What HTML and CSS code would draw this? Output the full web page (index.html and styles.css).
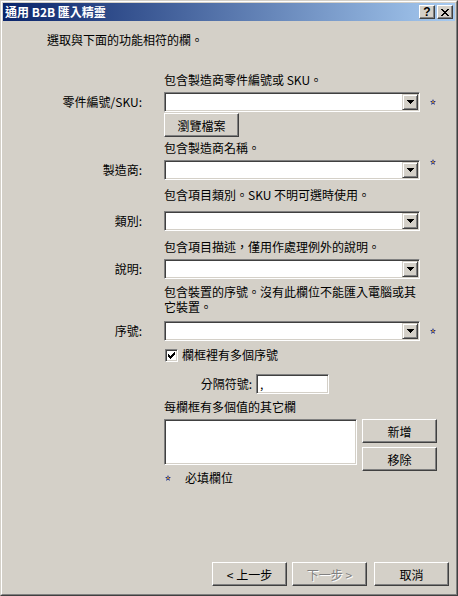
FILE: index.html
```html
<!DOCTYPE html>
<html lang="zh-Hant">
<head>
    <meta charset="UTF-8">
    <title>通用 B2B 匯入精靈</title>
    <link rel="stylesheet" href="styles.css">
</head>
<body>
    <div class="window">
        <div class="frame">
            <div class="titlebar">
                <span class="title">通用 B2B 匯入精靈</span>
                <div class="caption-btns">
                    <span class="cap-btn">?</span>
                    <span class="cap-btn">
                        <svg width="8" height="7" viewBox="0 0 8 7">
                            <path d="M0 0h2v1h-2zM6 0h2v1h-2zM1 1h2v1h-2zM5 1h2v1h-2zM2 2h4v1h-4zM3 3h2v1h-2zM2 4h4v1h-4zM1 5h2v1h-2zM5 5h2v1h-2zM0 6h2v1h-2zM6 6h2v1h-2z" fill="#000"/>
                        </svg>
                    </span>
                </div>
            </div>

            <div class="content">
                <p class="intro">選取與下面的功能相符的欄。</p>

                <p class="hint hint-part">包含製造商零件編號或 SKU。</p>
                <div class="row row-part">
                    <span class="lbl">零件編號/SKU:</span>
                    <div class="combo"><span class="dd"><svg width="7" height="4" viewBox="0 0 7 4"><path d="M0 0h7v1h-1v1h-1v1h-1v1h-1v-1h-1v-1h-1v-1h-1z"/></svg></span></div>
                    <svg class="req" width="6" height="6" viewBox="0 0 6 6"><path d="M3 0L3.8 2.1H6L4.2 3.4L4.9 6L3 4.4L1.1 6L1.8 3.4L0 2.1H2.2Z" fill="#1c2f8a"/><circle cx="3" cy="3" r="1" fill="#e8a020"/></svg>
                </div>
                <div class="row row-browse">
                    <span class="btn">瀏覽檔案</span>
                </div>

                <p class="hint hint-maker">包含製造商名稱。</p>
                <div class="row row-maker">
                    <span class="lbl">製造商:</span>
                    <div class="combo"><span class="dd"><svg width="7" height="4" viewBox="0 0 7 4"><path d="M0 0h7v1h-1v1h-1v1h-1v1h-1v-1h-1v-1h-1v-1h-1z"/></svg></span></div>
                    <svg class="req req-top" width="6" height="6" viewBox="0 0 6 6"><path d="M3 0L3.8 2.1H6L4.2 3.4L4.9 6L3 4.4L1.1 6L1.8 3.4L0 2.1H2.2Z" fill="#1c2f8a"/><circle cx="3" cy="3" r="1" fill="#e8a020"/></svg>
                </div>

                <p class="hint hint-cat">包含項目類別。SKU 不明可選時使用。</p>
                <div class="row row-cat">
                    <span class="lbl">類別:</span>
                    <div class="combo"><span class="dd"><svg width="7" height="4" viewBox="0 0 7 4"><path d="M0 0h7v1h-1v1h-1v1h-1v1h-1v-1h-1v-1h-1v-1h-1z"/></svg></span></div>
                </div>

                <p class="hint hint-desc">包含項目描述，僅用作處理例外的說明。</p>
                <div class="row row-desc">
                    <span class="lbl">說明:</span>
                    <div class="combo"><span class="dd"><svg width="7" height="4" viewBox="0 0 7 4"><path d="M0 0h7v1h-1v1h-1v1h-1v1h-1v-1h-1v-1h-1v-1h-1z"/></svg></span></div>
                </div>

                <p class="hint hint-serial">包含裝置的序號。沒有此欄位不能匯入電腦或其它裝置。</p>
                <div class="row row-serial">
                    <span class="lbl">序號:</span>
                    <div class="combo"><span class="dd"><svg width="7" height="4" viewBox="0 0 7 4"><path d="M0 0h7v1h-1v1h-1v1h-1v1h-1v-1h-1v-1h-1v-1h-1z"/></svg></span></div>
                    <svg class="req" width="6" height="6" viewBox="0 0 6 6"><path d="M3 0L3.8 2.1H6L4.2 3.4L4.9 6L3 4.4L1.1 6L1.8 3.4L0 2.1H2.2Z" fill="#1c2f8a"/><circle cx="3" cy="3" r="1" fill="#e8a020"/></svg>
                </div>

                <div class="row row-check">
                    <span class="checkbox">
                        <svg width="7" height="7" viewBox="0 0 7 7"><path d="M0 2h1v3h-1zM1 3h1v3h-1zM2 4h1v3h-1zM3 3h1v3h-1zM4 2h1v3h-1zM5 1h1v3h-1zM6 0h1v3h-1z"/></svg>
                    </span>
                    <span class="check-text">欄框裡有多個序號</span>
                </div>

                <div class="row row-sep">
                    <span class="sep-lbl">分隔符號:</span>
                    <span class="textbox">,</span>
                </div>

                <p class="multi">每欄框有多個值的其它欄</p>
                <div class="row row-list">
                    <div class="listbox"></div>
                    <div class="list-btns">
                        <span class="btn">新增</span>
                        <span class="btn">移除</span>
                    </div>
                </div>

                <div class="row row-note">
                    <svg width="6" height="6" viewBox="0 0 6 6"><path d="M3 0L3.8 2.1H6L4.2 3.4L4.9 6L3 4.4L1.1 6L1.8 3.4L0 2.1H2.2Z" fill="#1c2f8a"/><circle cx="3" cy="3" r="1" fill="#e8a020"/></svg>
                    <span>必填欄位</span>
                </div>

                <div class="footer">
                    <span class="btn">&lt; 上一步</span>
                    <span class="btn disabled">下一步 &gt;</span>
                    <span class="btn btn-cancel">取消</span>
                </div>
            </div>
        </div>
    </div>
</body>
</html>
```

FILE: styles.css
```css
:root {
    --face: #d4d0c8;
    --shadow: #808080;
    --dark: #404040;
    --light: #ffffff;
}

* {
    margin: 0;
    padding: 0;
    box-sizing: border-box;
}

body {
    width: 458px;
    height: 596px;
    font-family: "Noto Sans CJK TC", "Noto Sans", sans-serif;
    font-size: 12px;
    color: #000;
    background: var(--face);
    overflow: hidden;
}

/* Window frame */
.window {
    height: 596px;
    border: 1px solid;
    border-color: var(--face) var(--dark) var(--dark) var(--face);
}

.frame {
    height: 100%;
    border: 1px solid;
    border-color: var(--light) var(--shadow) var(--shadow) var(--light);
    padding: 1px;
    background: var(--face);
    display: flex;
    flex-direction: column;
}

.titlebar {
    height: 18px;
    flex-shrink: 0;
    display: flex;
    align-items: center;
    justify-content: space-between;
    padding: 0 2px;
    background: linear-gradient(to right, #0a246a, #a6caf0);
}

.title {
    color: #fff;
    font-weight: bold;
    line-height: 18px;
}

.caption-btns {
    display: flex;
    gap: 2px;
}

.cap-btn {
    width: 16px;
    height: 14px;
    display: flex;
    justify-content: center;
    align-items: center;
    font-family: "Liberation Sans", sans-serif;
    font-weight: bold;
    font-size: 12px;
    line-height: 12px;
    background: var(--face);
    border: 1px solid;
    border-color: var(--light) var(--dark) var(--dark) var(--light);
    box-shadow: inset -1px -1px var(--shadow);
}

/* Raised and sunken controls */
.btn {
    width: 75px;
    height: 24px;
    display: flex;
    justify-content: center;
    align-items: center;
    background: var(--face);
    border: 1px solid;
    border-color: var(--light) var(--dark) var(--dark) var(--light);
    box-shadow: inset -1px -1px var(--shadow);
}

.btn.disabled {
    color: var(--shadow);
    text-shadow: 1px 1px var(--light);
}

.combo,
.textbox,
.listbox,
.checkbox {
    background: #fff;
    border: 1px solid;
    border-color: var(--shadow) var(--light) var(--light) var(--shadow);
    box-shadow: inset 1px 1px var(--dark), inset -1px -1px var(--face);
}

/* Content */
.content {
    flex: 1;
    display: flex;
    flex-direction: column;
}

.intro {
    margin: 12px 0 0 44px;
    line-height: 14px;
}

.hint {
    margin-left: 161px;
    width: 256px;
    line-height: 14px;
}

.row {
    display: flex;
    align-items: center;
}

.lbl {
    width: 161px;
    flex-shrink: 0;
    padding-right: 22px;
    text-align: right;
    line-height: 14px;
}

.combo {
    width: 256px;
    height: 20px;
    padding: 1px;
    display: flex;
    justify-content: flex-end;
}

.dd {
    width: 16px;
    height: 16px;
    display: flex;
    justify-content: center;
    align-items: center;
    background: var(--face);
    border: 1px solid;
    border-color: var(--face) var(--dark) var(--dark) var(--face);
    box-shadow: inset 1px 1px var(--light), inset -1px -1px var(--shadow);
}

.req {
    margin-left: 10px;
}

.req-top {
    align-self: flex-start;
    margin-top: -1px;
}

.hint-part { margin-top: 26px; }
.row-part { margin-top: 5px; }
.row-browse { margin: 1px 0 0 161px; }
.hint-maker { margin-top: 4px; }
.row-maker { margin-top: 5px; }
.hint-cat { margin-top: 8px; }
.row-cat { margin-top: 9px; }
.hint-desc { margin-top: 9px; }
.row-desc { margin-top: 5px; }
.hint-serial { margin-top: 5px; line-height: 15px; }
.row-serial { margin-top: 7px; }

.row-check {
    margin: 7px 0 0 162px;
    gap: 4px;
}

.checkbox {
    width: 13px;
    height: 13px;
    display: flex;
    justify-content: center;
    align-items: center;
}

.check-text {
    line-height: 14px;
}

.row-sep {
    margin: 12px 0 0 161px;
    gap: 4px;
}

.sep-lbl {
    width: 88px;
    text-align: right;
    line-height: 14px;
}

.textbox {
    width: 73px;
    height: 20px;
    padding: 0 3px;
    line-height: 18px;
}

.multi {
    margin: 6px 0 0 161px;
    line-height: 14px;
}

.row-list {
    margin: 5px 0 0 161px;
    align-items: flex-start;
    gap: 5px;
}

.listbox {
    width: 193px;
    height: 46px;
}

.list-btns {
    display: flex;
    flex-direction: column;
    gap: 4px;
}

.row-note {
    margin-left: 162px;
    gap: 14px;
    line-height: 14px;
}

.footer {
    margin-top: auto;
    padding: 0 6px 7px 0;
    display: flex;
    justify-content: flex-end;
    gap: 5px;
}

.btn-cancel {
    margin-left: 2px;
}
```
